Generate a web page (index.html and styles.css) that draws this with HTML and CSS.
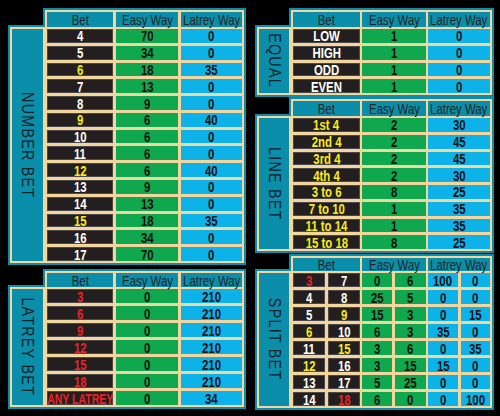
FILE: index.html
```html
<!DOCTYPE html>
<html>
<head>
<meta charset="utf-8">
<link rel="stylesheet" href="styles.css">
</head>
<body>
<div class="board">
  <div class="col">
    <div class="panel left number">
      <div class="phead">
        <div class="h"><span>Bet</span></div><div class="h"><span>Easy Way</span></div><div class="h"><span>Latrey Way</span></div>
      </div>
      <div class="pbody">
        <div class="label"><span>NUMBER BET</span></div>
        <div class="rows">
          <div class="d"><span>4</span></div><div class="g"><span>70</span></div><div class="b"><span>0</span></div>
          <div class="d"><span>5</span></div><div class="g"><span>34</span></div><div class="b"><span>0</span></div>
          <div class="d y"><span>6</span></div><div class="g"><span>18</span></div><div class="b"><span>35</span></div>
          <div class="d"><span>7</span></div><div class="g"><span>13</span></div><div class="b"><span>0</span></div>
          <div class="d"><span>8</span></div><div class="g"><span>9</span></div><div class="b"><span>0</span></div>
          <div class="d y"><span>9</span></div><div class="g"><span>6</span></div><div class="b"><span>40</span></div>
          <div class="d"><span>10</span></div><div class="g"><span>6</span></div><div class="b"><span>0</span></div>
          <div class="d"><span>11</span></div><div class="g"><span>6</span></div><div class="b"><span>0</span></div>
          <div class="d y"><span>12</span></div><div class="g"><span>6</span></div><div class="b"><span>40</span></div>
          <div class="d"><span>13</span></div><div class="g"><span>9</span></div><div class="b"><span>0</span></div>
          <div class="d"><span>14</span></div><div class="g"><span>13</span></div><div class="b"><span>0</span></div>
          <div class="d y"><span>15</span></div><div class="g"><span>18</span></div><div class="b"><span>35</span></div>
          <div class="d"><span>16</span></div><div class="g"><span>34</span></div><div class="b"><span>0</span></div>
          <div class="d"><span>17</span></div><div class="g"><span>70</span></div><div class="b"><span>0</span></div>
        </div>
      </div>
    </div>
    <div class="panel left latrey">
      <div class="phead">
        <div class="h"><span>Bet</span></div><div class="h"><span>Easy Way</span></div><div class="h"><span>Latrey Way</span></div>
      </div>
      <div class="pbody">
        <div class="label"><span>LATREY BET</span></div>
        <div class="rows">
          <div class="d r"><span>3</span></div><div class="g"><span>0</span></div><div class="b"><span>210</span></div>
          <div class="d r"><span>6</span></div><div class="g"><span>0</span></div><div class="b"><span>210</span></div>
          <div class="d r"><span>9</span></div><div class="g"><span>0</span></div><div class="b"><span>210</span></div>
          <div class="d r"><span>12</span></div><div class="g"><span>0</span></div><div class="b"><span>210</span></div>
          <div class="d r"><span>15</span></div><div class="g"><span>0</span></div><div class="b"><span>210</span></div>
          <div class="d r"><span>18</span></div><div class="g"><span>0</span></div><div class="b"><span>210</span></div>
          <div class="d r any"><span>ANY LATREY</span></div><div class="g"><span>0</span></div><div class="b"><span>34</span></div>
        </div>
      </div>
    </div>
  </div>
  <div class="col">
    <div class="panel right equal">
      <div class="phead">
        <div class="h"><span>Bet</span></div><div class="h"><span>Easy Way</span></div><div class="h"><span>Latrey Way</span></div>
      </div>
      <div class="pbody">
        <div class="label"><span>EQUAL</span></div>
        <div class="rows">
          <div class="d"><span>LOW</span></div><div class="g"><span>1</span></div><div class="b"><span>0</span></div>
          <div class="d"><span>HIGH</span></div><div class="g"><span>1</span></div><div class="b"><span>0</span></div>
          <div class="d"><span>ODD</span></div><div class="g"><span>1</span></div><div class="b"><span>0</span></div>
          <div class="d"><span>EVEN</span></div><div class="g"><span>1</span></div><div class="b"><span>0</span></div>
        </div>
      </div>
    </div>
    <div class="panel right line">
      <div class="phead">
        <div class="h"><span>Bet</span></div><div class="h"><span>Easy Way</span></div><div class="h"><span>Latrey Way</span></div>
      </div>
      <div class="pbody">
        <div class="label"><span>LINE BET</span></div>
        <div class="rows">
          <div class="d y"><span>1st 4</span></div><div class="g"><span>2</span></div><div class="b"><span>30</span></div>
          <div class="d y"><span>2nd 4</span></div><div class="g"><span>2</span></div><div class="b"><span>45</span></div>
          <div class="d y"><span>3rd 4</span></div><div class="g"><span>2</span></div><div class="b"><span>45</span></div>
          <div class="d y"><span>4th 4</span></div><div class="g"><span>2</span></div><div class="b"><span>30</span></div>
          <div class="d y"><span>3 to 6</span></div><div class="g"><span>8</span></div><div class="b"><span>25</span></div>
          <div class="d y"><span>7 to 10</span></div><div class="g"><span>1</span></div><div class="b"><span>35</span></div>
          <div class="d y"><span>11 to 14</span></div><div class="g"><span>1</span></div><div class="b"><span>35</span></div>
          <div class="d y"><span>15 to 18</span></div><div class="g"><span>8</span></div><div class="b"><span>25</span></div>
        </div>
      </div>
    </div>
    <div class="panel right split">
      <div class="phead">
        <div class="h"><span>Bet</span></div><div class="h"><span>Easy Way</span></div><div class="h"><span>Latrey Way</span></div>
      </div>
      <div class="pbody">
        <div class="label"><span>SPLIT BET</span></div>
        <div class="rows">
          <div class="d r"><span>3</span></div><div class="d"><span>7</span></div><div class="g"><span>0</span></div><div class="g"><span>6</span></div><div class="b"><span>100</span></div><div class="b"><span>0</span></div>
          <div class="d"><span>4</span></div><div class="d"><span>8</span></div><div class="g"><span>25</span></div><div class="g"><span>5</span></div><div class="b"><span>0</span></div><div class="b"><span>0</span></div>
          <div class="d"><span>5</span></div><div class="d y"><span>9</span></div><div class="g"><span>15</span></div><div class="g"><span>3</span></div><div class="b"><span>0</span></div><div class="b"><span>15</span></div>
          <div class="d y"><span>6</span></div><div class="d"><span>10</span></div><div class="g"><span>6</span></div><div class="g"><span>3</span></div><div class="b"><span>35</span></div><div class="b"><span>0</span></div>
          <div class="d"><span>11</span></div><div class="d y"><span>15</span></div><div class="g"><span>3</span></div><div class="g"><span>6</span></div><div class="b"><span>0</span></div><div class="b"><span>35</span></div>
          <div class="d y"><span>12</span></div><div class="d"><span>16</span></div><div class="g"><span>3</span></div><div class="g"><span>15</span></div><div class="b"><span>15</span></div><div class="b"><span>0</span></div>
          <div class="d"><span>13</span></div><div class="d"><span>17</span></div><div class="g"><span>5</span></div><div class="g"><span>25</span></div><div class="b"><span>0</span></div><div class="b"><span>0</span></div>
          <div class="d"><span>14</span></div><div class="d r"><span>18</span></div><div class="g"><span>6</span></div><div class="g"><span>0</span></div><div class="b"><span>0</span></div><div class="b"><span>100</span></div>
        </div>
      </div>
    </div>
  </div>
</div>
</body>
</html>
```

FILE: styles.css
```css
html, body {
  margin: 0;
  padding: 0;
  background: #000;
}
body {
  width: 500px;
  height: 416px;
  overflow: hidden;
  font-family: "Liberation Sans", Arial, sans-serif;
}
.board {
  display: flex;
  align-items: flex-start;
  gap: 9px;
  padding: 8px 0 0 8px;
}
.col {
  display: flex;
  flex-direction: column;
}
.panel {
  display: flex;
  flex-direction: column;
}
.phead {
  position: relative;
  z-index: 1;
  display: grid;
  border: 2px solid #0a8ea9;
  border-bottom: 0;
  background: #f3d69d;
  padding: 2px 2px 0 2px;
  margin-bottom: -2px;
}
.h {
  background: #0a8ea9;
  color: #262424;
  font-size: 15px;
  display: flex;
  align-items: center;
  justify-content: center;
  line-height: 1;
  white-space: nowrap;
  min-height: 0;
}
.h span {
  display: inline-block;
  transform: scaleX(0.76);
}
.pbody {
  display: flex;
  border: 2px solid #0a8ea9;
  background: #f3d69d;
  padding: 2px;
  gap: 4px;
}
.label {
  contain: size;
  background: #0a8ea9;
  writing-mode: vertical-rl;
  display: flex;
  align-items: center;
  justify-content: center;
  color: #11222a;
  font-size: 17px;
  letter-spacing: 1.5px;
  line-height: 1;
  white-space: nowrap;
}
.label span {
  display: inline-block;
  transform: scaleY(0.84);
}
.rows {
  display: grid;
  grid-auto-rows: minmax(0, 1fr);
  row-gap: 3px;
}
.rows > div {
  display: flex;
  align-items: center;
  justify-content: center;
  font-weight: bold;
  font-size: 15px;
  line-height: 1;
  white-space: nowrap;
  min-height: 0;
}
.rows span {
  display: inline-block;
  transform: scaleX(0.76);
}
.d {
  background: #231f20;
  box-shadow: inset 0 0 0 1px #4d4849;
  color: #fff;
}
.d.y { color: #f7ec1b; }
.d.r { color: #ee2027; }
.g {
  background: #0fa84e;
  color: #111;
}
.b {
  background: #0cb2e8;
  color: #111;
}
.rows .any span {
  transform: scaleX(0.7);
}

/* left panels */
.left .phead {
  margin-left: 35px;
  grid-template-columns: 66px 62px 61px;
  column-gap: 3px;
}
.left .label { width: 31px; }
.left .rows {
  grid-template-columns: 66px 62px 61px;
  column-gap: 3px;
}
.number .phead .h { height: 15px; }
.number .rows { height: 232px; }
.latrey { margin-top: 4px; }
.latrey .phead .h { height: 14px; }
.latrey .rows { height: 116px; }

/* right panels */
.right .phead {
  margin-left: 34px;
  grid-template-columns: 67px 64px 62px;
  column-gap: 2px;
}
.right .label { width: 30px; }
.right .rows {
  grid-template-columns: 67px 64px 62px;
  column-gap: 2px;
}
.equal .phead .h { height: 15px; }
.equal .rows { height: 64px; }
.line .phead .h { height: 15px; }
.line .rows { height: 131px; }
.split { margin-top: 1px; }
.split .phead .h { height: 13px; }
.split .rows {
  height: 133px;
  grid-template-columns: 32px 32px 29px 31px 29px 29px;
  column-gap: 3px;
}
.split .rows > div:nth-child(6n+3),
.split .rows > div:nth-child(6n+5) {
  margin-left: -1px;
}
```
